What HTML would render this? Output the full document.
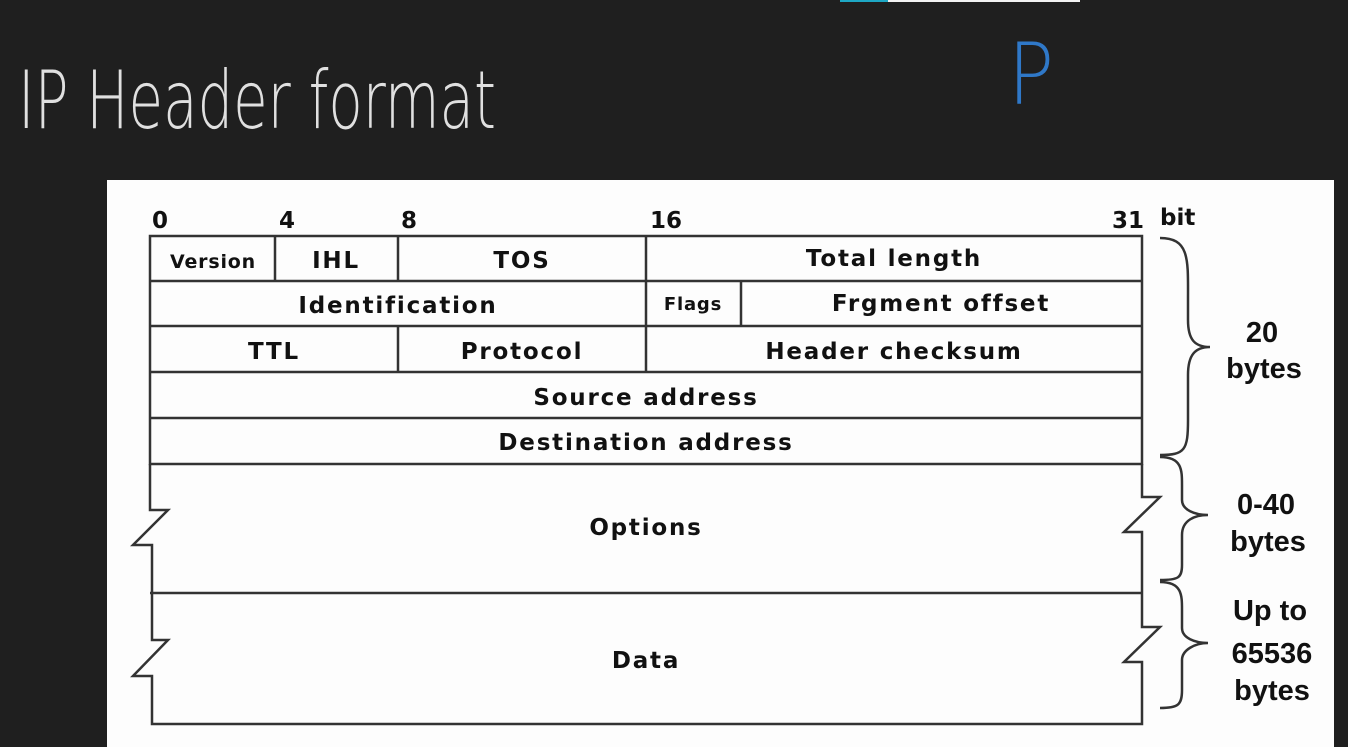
<!DOCTYPE html>
<html><head><style>
html,body{margin:0;padding:0;background:#1f1f1f;width:1348px;height:747px;overflow:hidden}
svg{display:block}
.t{font-family:"DejaVu Sans","Liberation Sans",sans-serif;font-weight:bold;fill:#111}
.h{font-family:"Liberation Sans",sans-serif;font-weight:bold;fill:#111}
</style></head><body>
<svg width="1348" height="747" viewBox="0 0 1348 747" xmlns="http://www.w3.org/2000/svg">
<rect x="0" y="0" width="1348" height="747" fill="#1f1f1f"/>
<rect x="840" y="0" width="48" height="2" fill="#1ea7c4"/>
<rect x="888" y="0" width="192" height="2" fill="#f2f2f2"/>
<text x="18" y="128" font-family="DejaVu Sans,Liberation Sans,sans-serif" font-weight="200" font-size="80" fill="#e0e0e0" textLength="478" lengthAdjust="spacingAndGlyphs">IP Header format</text>
<text x="1008" y="104" font-family="DejaVu Sans,Liberation Sans,sans-serif" font-weight="200" font-size="86" fill="#2f78c8" textLength="46" lengthAdjust="spacingAndGlyphs">P</text>
<rect x="107" y="180" width="1227" height="567" fill="#fdfdfd"/>
<g class="t" font-size="23">
<text x="152" y="228">0</text><text x="279" y="228">4</text><text x="401" y="228">8</text>
<text x="650" y="228">16</text><text x="1112" y="228">31</text><text x="1160" y="225">bit</text>
</g>
<g stroke="#333" stroke-width="2.5" fill="none">
<rect x="150" y="236" width="992" height="228"/>
<path d="M150 281H1142M150 326H1142M150 372H1142M150 418H1142"/>
<path d="M275 236V281M398 236V281M646 236V372M741 281V326M398 326V372"/>
<path d="M150 464V510H168L133 545H152V593V640H168L133 676H152V724H1142V676V662H1124L1160 627H1142V593V532H1124L1160 497H1142V464"/>
<path d="M150 593H1142"/>
<path d="M1160 238C1190 238 1188 260 1188 300V320C1188 340 1195 347 1210 347C1195 347 1188 355 1188 375V420C1188 450 1185 455 1160 455"/>
<path d="M1160 457C1182 457 1182 470 1182 485V500C1182 510 1195 515 1208 515C1195 515 1182 520 1182 535V565C1182 578 1178 580 1160 580"/>
<path d="M1160 582C1182 582 1182 595 1182 610V628C1182 638 1195 643 1208 643C1195 643 1182 650 1182 660V690C1182 705 1178 708 1160 708"/>
</g>
<g class="t" font-size="23" text-anchor="middle" letter-spacing="1.8">
<text x="213" y="268" font-size="19" letter-spacing="0.8">Version</text>
<text x="336" y="268">IHL</text>
<text x="522" y="268">TOS</text>
<text x="894" y="266">Total length</text>
<text x="398" y="313">Identification</text>
<text x="693" y="310" font-size="18" letter-spacing="0.8">Flags</text>
<text x="941" y="311">Frgment offset</text>
<text x="274" y="359">TTL</text>
<text x="522" y="359">Protocol</text>
<text x="894" y="359">Header checksum</text>
<text x="646" y="405">Source address</text>
<text x="646" y="450">Destination address</text>
<text x="646" y="535">Options</text>
<text x="646" y="668">Data</text>
</g>
<g class="h" font-size="29" text-anchor="middle">
<text x="1262" y="342">20</text><text x="1264" y="378">bytes</text>
<text x="1266" y="514">0-40</text><text x="1268" y="551">bytes</text>
<text x="1270" y="620">Up to</text><text x="1272" y="663">65536</text><text x="1272" y="700">bytes</text>
</g>
</svg>
</body></html>
